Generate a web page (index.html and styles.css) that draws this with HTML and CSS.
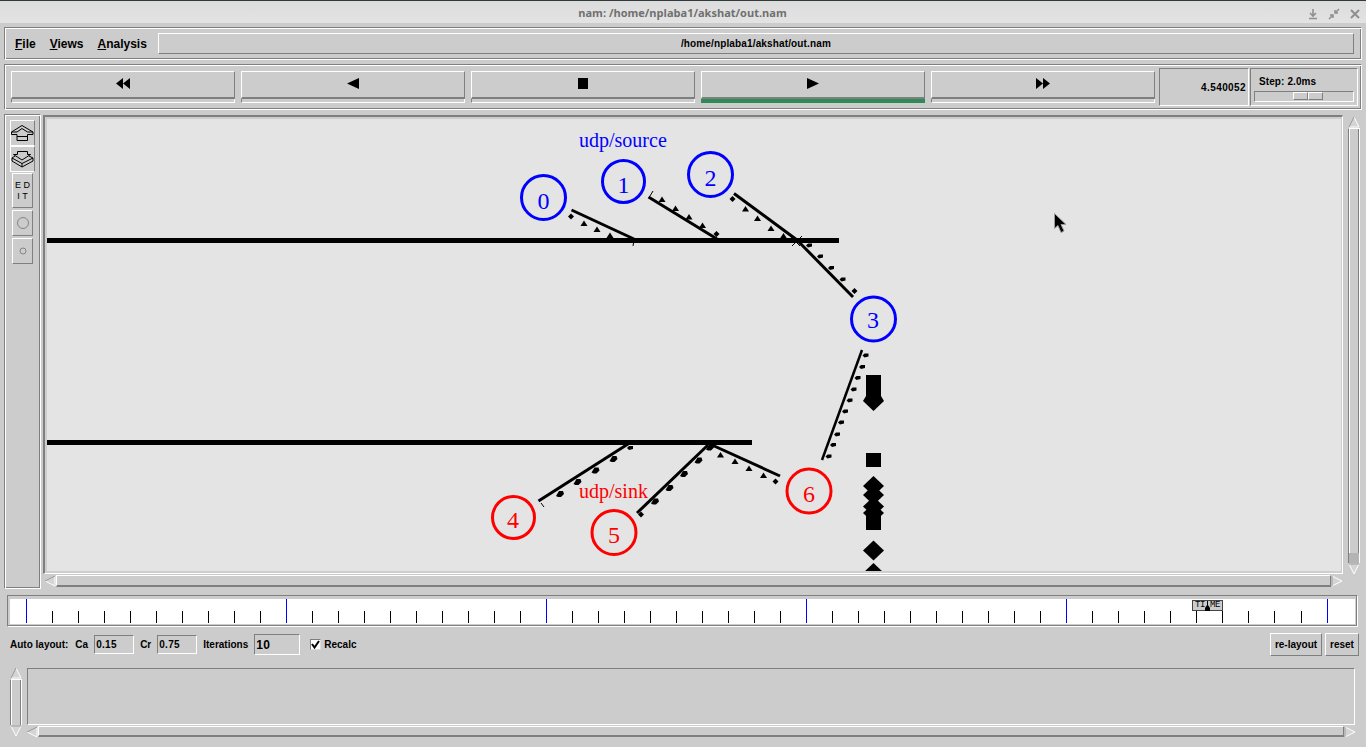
FILE: index.html
```html
<!DOCTYPE html>
<html lang="en">
<head>
<meta charset="utf-8">
<title>nam: /home/nplaba1/akshat/out.nam</title>
<link rel="stylesheet" href="styles.css">
</head>
<body>
<header class="titlebar">
  <span class="title">nam: /home/nplaba1/akshat/out.nam</span>
  <div class="wm-buttons">
    <svg width="12" height="12" viewBox="0 0 12 12"><path d="M6 1V7M3 5L6 8L9 5M2 10.5H10" fill="none" stroke="#8f8f8f" stroke-width="1.6"/></svg>
    <svg width="12" height="12" viewBox="0 0 12 12"><path d="M11 1L7.5 4.5M7 2V5H10M1 11L4.5 7.5M5 10V7H2" fill="none" stroke="#8f8f8f" stroke-width="1.5"/></svg>
    <svg width="12" height="12" viewBox="0 0 12 12"><path d="M2 2L10 10M10 2L2 10" fill="none" stroke="#8f8f8f" stroke-width="2"/></svg>
  </div>
</header>

<nav class="menu-frame groove">
  <span class="menu-item"><u>F</u>ile</span>
  <span class="menu-item"><u>V</u>iews</span>
  <span class="menu-item"><u>A</u>nalysis</span>
  <div class="path-field raised">/home/nplaba1/akshat/out.nam</div>
</nav>

<section class="tool-frame groove">
  <div class="play-btn"><div class="face"><svg width="14" height="11" viewBox="0 0 14 11"><path d="M0 5.5L7 0V11ZM7 5.5L14 0V11Z"/></svg></div><div class="strip"></div></div>
  <div class="play-btn"><div class="face"><svg width="12" height="11" viewBox="0 0 12 11"><path d="M0 5.5L12 0V11Z"/></svg></div><div class="strip"></div></div>
  <div class="play-btn"><div class="face"><svg width="10" height="11" viewBox="0 0 10 11"><path d="M0 0H10V11H0Z"/></svg></div><div class="strip"></div></div>
  <div class="play-btn"><div class="face"><svg width="12" height="11" viewBox="0 0 12 11"><path d="M0 0L12 5.5L0 11Z"/></svg></div><div class="strip strip-on"></div></div>
  <div class="play-btn"><div class="face"><svg width="14" height="11" viewBox="0 0 14 11"><path d="M0 0L7 5.5L0 11ZM7 0L14 5.5L7 11Z"/></svg></div><div class="strip"></div></div>
  <div class="time-cell sunken">4.540052</div>
  <div class="step-cell sunken">
    <span class="step-label">Step: 2.0ms</span>
    <div class="step-trough sunken"><div class="step-thumb raised"></div><div class="step-thumb raised"></div></div>
  </div>
</section>

<main class="main">
  <aside class="tools groove">
    <div class="tool-btn tool-wide raised">
      <svg width="25" height="26" viewBox="10 120 25 26"><path d="M22 125.5L33 132V134.5H27.5V140.5H17V134.5H11.5V132ZM11.5 132H17L22 128.5L27.5 132H33M17 136.5H27.5" fill="none" stroke="#000" stroke-width="1"/></svg>
    </div>
    <div class="tool-btn tool-wide raised">
      <svg width="25" height="25" viewBox="10 147 25 25"><path d="M17.5 151.5H27.5V154.5H30.5L22 160L13.5 154.5H17.5ZM15 156L12 158V161L22 167L33 161V158L29 156M12 158L22 163.5L33 158M22 163.5V167" fill="none" stroke="#000" stroke-width="1"/></svg>
    </div>
    <div class="tool-btn tool-edit raised"><span>E D</span><span>I T</span></div>
    <div class="tool-btn tool-circle raised"><svg width="14" height="14" viewBox="0 0 14 14"><circle cx="7" cy="7" r="5.5" fill="none" stroke="#858585"/></svg></div>
    <div class="tool-btn tool-circle raised"><svg width="10" height="10" viewBox="0 0 10 10"><circle cx="5" cy="5" r="3" fill="none" stroke="#858585"/></svg></div>
  </aside>

  <div class="center">
    <div class="canvas">
      <svg class="net" width="1294" height="452" viewBox="47 119 1294 452">
        <defs>
          <path id="tri" d="M-3.5 2.5L0 -3L3.5 2.5Z"/>
          <path id="dia" d="M-3 0L0 -3L3 0L0 3Z"/>
          <path id="blob" d="M-4 2L-1 -3L3 -3L4 0L1 3L-2 3Z"/>
          <path id="nib" d="M-3 0L-1 -2L3 -2L3 1L-1 2Z"/>
          <path id="big" d="M-10.5 0L0 -10L10.5 0L0 10Z"/>
        </defs>

        <g class="bars">
          <line x1="47" y1="240.5" x2="839" y2="240.5"/>
          <line x1="47" y1="442.5" x2="752" y2="442.5"/>
        </g>
        <g class="links">
          <line x1="571.5" y1="210" x2="634" y2="239"/>
          <line x1="648.5" y1="197" x2="717" y2="239"/>
          <line x1="734" y1="193.5" x2="797" y2="240"/>
          <line x1="797" y1="240" x2="853" y2="297"/>
          <line x1="862" y1="350" x2="822" y2="460"/>
          <line x1="538.5" y1="501" x2="628" y2="444"/>
          <line x1="637" y1="513" x2="708" y2="445"/>
          <line x1="780" y1="476" x2="712" y2="445"/>
        </g>
        <g class="ticks">
          <path d="M634 240L633 246M653 191L650 196M802 236L792 246M790 236L800 246M541 503L544 507"/>
        </g>
        <g class="packets">
          <use href="#dia" x="571" y="216.5"/><use href="#tri" x="584" y="223.5"/><use href="#tri" x="597" y="229.5"/><use href="#tri" x="610" y="235.5"/>
          <use href="#tri" x="662" y="199.5"/><use href="#tri" x="675.5" y="208.5"/><use href="#tri" x="689" y="217"/><use href="#tri" x="702.5" y="225.5"/><use href="#dia" x="716.5" y="234"/>
          <use href="#dia" x="732.5" y="199"/><use href="#tri" x="745.5" y="209"/><use href="#tri" x="757.5" y="218.5"/><use href="#tri" x="771" y="228.5"/><use href="#tri" x="783.5" y="236"/>
          <use href="#nib" x="809" y="245.5"/><use href="#nib" x="820" y="256.5"/><use href="#nib" x="831" y="268"/><use href="#nib" x="842.5" y="279.5"/><use href="#dia" x="854.5" y="291"/>
          <use href="#nib" x="865.5" y="355.5"/><use href="#nib" x="862" y="367"/><use href="#nib" x="857.5" y="378"/><use href="#nib" x="853.5" y="389.5"/><use href="#nib" x="849.5" y="400.5"/><use href="#nib" x="845" y="411.5"/><use href="#nib" x="841" y="422.5"/><use href="#nib" x="837" y="434.5"/><use href="#nib" x="833" y="445"/><use href="#nib" x="828.5" y="456.5"/>
          <use href="#nib" x="630" y="448"/><use href="#blob" x="613.5" y="459"/><use href="#blob" x="595.5" y="470.5"/><use href="#blob" x="577.5" y="482"/><use href="#blob" x="560" y="494"/>
          <use href="#blob" x="710" y="447.5"/><use href="#blob" x="698.5" y="460.5"/><use href="#blob" x="684" y="474"/><use href="#blob" x="669.5" y="488"/><use href="#blob" x="655" y="501.5"/><use href="#dia" x="641" y="514.5"/>
          <use href="#tri" x="720.5" y="455"/><use href="#tri" x="735" y="461.5"/><use href="#tri" x="749" y="468.5"/><use href="#tri" x="763.5" y="475.5"/><use href="#dia" x="775.5" y="481.5"/>
          <path d="M866 375H881V396L884 401L873.5 411L863 401L866 396Z"/>
          <path d="M866 453H881V467H866Z"/>
          <use href="#big" x="873.5" y="486"/><use href="#big" x="873.5" y="495"/><use href="#big" x="873.5" y="506.5"/><use href="#big" x="873.5" y="513"/>
          <path d="M866 513H881V530H866Z"/>
          <use href="#big" x="873.5" y="550.5"/><use href="#big" x="873.5" y="573"/>
        </g>
        <g class="node-blue">
          <circle cx="543.5" cy="197.5" r="22"/><circle cx="623.5" cy="181.5" r="21"/><circle cx="710.5" cy="174.5" r="22"/><circle cx="873.5" cy="319" r="22"/>
        </g>
        <g class="node-red">
          <circle cx="513.5" cy="517.5" r="21"/><circle cx="614" cy="532.5" r="22"/><circle cx="809" cy="491" r="22"/>
        </g>
        <g class="num-blue">
          <text x="543.5" y="208.5">0</text><text x="623.5" y="192.5">1</text><text x="710.5" y="185.5">2</text><text x="873" y="328">3</text>
        </g>
        <g class="num-red">
          <text x="513" y="527.5">4</text><text x="614" y="543">5</text><text x="809" y="502">6</text>
        </g>
        <text class="label-blue" x="579" y="147">udp/source</text>
        <text class="label-red" x="579" y="498">udp/sink</text>
        <path class="cursor" d="M1054.5 213.5V228.5L1058 225.5L1061 232.5L1064 231L1061 224.5H1066Z"/>
      </svg>
    </div>
    <div class="hscroll canvas-h">
      <svg class="arrow" width="12" height="12" viewBox="0 0 12 12"><path d="M1 6L11 1V11Z" fill="#d4d4d4" stroke="#fff"/><path d="M1 6L11 1" stroke="#8a8a8a" fill="none"/></svg>
      <div class="h-trough"></div>
      <svg class="arrow" width="12" height="12" viewBox="0 0 12 12"><path d="M11 6L1 1V11Z" fill="#d4d4d4" stroke="#fff"/><path d="M1 1V11" stroke="#8a8a8a" fill="none"/></svg>
    </div>
  </div>

  <div class="vscroll canvas-v">
    <svg class="arrow" width="12" height="12" viewBox="0 0 12 12"><path d="M6 1L1 11H11Z" fill="#d4d4d4" stroke="#fff"/><path d="M6 1L1 11" stroke="#8a8a8a" fill="none"/></svg>
    <div class="v-trough"></div>
    <div class="v-active"></div>
    <svg class="arrow" width="12" height="12" viewBox="0 0 12 12"><path d="M6 11L1 1H11Z" fill="#d4d4d4" stroke="#fff"/><path d="M1 1H11" stroke="#8a8a8a" fill="none"/></svg>
  </div>
</main>

<section class="timeline">
  <div class="time-strip">
    <i class="t b"></i><i class="t"></i><i class="t"></i><i class="t"></i><i class="t"></i><i class="t"></i><i class="t"></i><i class="t"></i><i class="t"></i><i class="t"></i>
    <i class="t b"></i><i class="t"></i><i class="t"></i><i class="t"></i><i class="t"></i><i class="t"></i><i class="t"></i><i class="t"></i><i class="t"></i><i class="t"></i>
    <i class="t b"></i><i class="t"></i><i class="t"></i><i class="t"></i><i class="t"></i><i class="t"></i><i class="t"></i><i class="t"></i><i class="t"></i><i class="t"></i>
    <i class="t b"></i><i class="t"></i><i class="t"></i><i class="t"></i><i class="t"></i><i class="t"></i><i class="t"></i><i class="t"></i><i class="t"></i><i class="t"></i>
    <i class="t b"></i><i class="t"></i><i class="t"></i><i class="t"></i><i class="t"></i><i class="t"></i><i class="t"></i><i class="t"></i><i class="t t-wide"></i><i class="t"></i>
    <i class="t b"></i>
    <div class="time-marker"><span>TI</span><svg width="5" height="10" viewBox="0 0 5 10"><path d="M2 0H3V4L5 7V10H0V7L2 4Z"/></svg><span>ME</span></div>
  </div>
</section>

<section class="auto-row">
  <span class="lbl lbl-first">Auto layout:</span>
  <span class="lbl">Ca</span>
  <span class="entry sunken">0.15</span>
  <span class="lbl">Cr</span>
  <span class="entry sunken">0.75</span>
  <span class="lbl">Iterations</span>
  <span class="entry entry-iter sunken">10</span>
  <span class="check"><svg width="9" height="9" viewBox="0 0 9 9"><path d="M1 4L3.5 7.5L8 1" fill="none" stroke="#000" stroke-width="2"/></svg></span>
  <span class="lbl lbl-check">Recalc</span>
  <span class="cmd cmd-layout raised">re-layout</span>
  <span class="cmd cmd-reset raised">reset</span>
</section>

<section class="console">
  <div class="vscroll console-v">
    <svg class="arrow" width="12" height="12" viewBox="0 0 12 12"><path d="M6 1L1 11H11Z" fill="#d4d4d4" stroke="#fff"/><path d="M6 1L1 11" stroke="#8a8a8a" fill="none"/></svg>
    <div class="v-trough"></div>
    <svg class="arrow" width="12" height="12" viewBox="0 0 12 12"><path d="M6 11L1 1H11Z" fill="#d4d4d4" stroke="#fff"/><path d="M1 1H11" stroke="#8a8a8a" fill="none"/></svg>
  </div>
  <div class="console-main">
    <div class="console-text sunken"></div>
    <div class="hscroll console-h">
      <svg class="arrow" width="12" height="12" viewBox="0 0 12 12"><path d="M1 6L11 1V11Z" fill="#d4d4d4" stroke="#fff"/><path d="M1 6L11 1" stroke="#8a8a8a" fill="none"/></svg>
      <div class="h-trough"></div>
      <svg class="arrow" width="12" height="12" viewBox="0 0 12 12"><path d="M11 6L1 1V11Z" fill="#d4d4d4" stroke="#fff"/><path d="M1 1V11" stroke="#8a8a8a" fill="none"/></svg>
    </div>
  </div>
</section>
</body>
</html>
```

FILE: styles.css
```css
* { box-sizing: border-box; }
html, body { margin: 0; padding: 0; }
body {
  width: 1366px;
  height: 747px;
  overflow: hidden;
  background: #cccccc;
  color: #000;
  font: bold 10px "Liberation Sans", Arial, sans-serif;
  display: flex;
  flex-direction: column;
}

.groove {
  border: 1px solid;
  border-color: #7f7f7f #ffffff #ffffff #7f7f7f;
  box-shadow: inset 1px 1px 0 #ffffff, inset -1px -1px 0 #7f7f7f;
}
.raised {
  border: 1px solid;
  border-color: #ffffff #7f7f7f #7f7f7f #ffffff;
}
.sunken {
  border: 1px solid;
  border-color: #7f7f7f #ffffff #ffffff #7f7f7f;
}

/* title bar */
.titlebar {
  height: 23px;
  flex: none;
  border-top: 1px solid #2e3a3c;
  background: linear-gradient(#dcdcdc, #e3e3e3);
  position: relative;
  display: flex;
  align-items: center;
  justify-content: center;
}
.title {
  font: bold 11px "Open Sans", "Noto Sans", sans-serif;
  color: #6f6f6f;
  margin-left: -1px;
  margin-top: 1px;
}
.wm-buttons {
  position: absolute;
  right: 5px;
  top: 7px;
  display: flex;
  gap: 9px;
}

/* menu */
.menu-frame {
  flex: none;
  margin: 4px 4px 0 4px;
  height: 33px;
  padding: 5px 7px 5px 10px;
  display: flex;
  align-items: center;
}
.menu-item {
  font-size: 12px;
  margin-right: 14px;
}
.menu-item:nth-child(3) { margin-right: 11px; }
.path-field {
  flex: 1;
  height: 21px;
  display: flex;
  align-items: center;
  justify-content: center;
  font-size: 10px;
  letter-spacing: 0.14px;
}

/* transport */
.tool-frame {
  flex: none;
  margin: 4px 4px 0 4px;
  height: 46px;
  padding: 3px 2px 3px 6px;
  display: flex;
  align-items: center;
}
.play-btn {
  width: 224px;
  height: 32px;
  margin-right: 6px;
  display: flex;
  flex-direction: column;
}
.play-btn:nth-child(5) { margin-right: 4px; }
.face {
  height: 28px;
  border: solid #7f7f7f;
  border-width: 1px 1px 2px 1px;
  border-top-color: #fff;
  border-left-color: #fff;
  display: flex;
  align-items: center;
  justify-content: center;
  padding-bottom: 2px;
}
.face svg { display: block; fill: #000; }
.strip {
  height: 4px;
  border: solid #fff;
  border-width: 0 1px 1px 1px;
  border-left-color: #7f7f7f;
}
.strip-on {
  background: #2e8b57;
  border-color: #2e8b57;
}
.time-cell {
  width: 90px;
  height: 38px;
  margin-right: 1px;
  display: flex;
  align-items: center;
  justify-content: flex-end;
  padding: 1px 2px 0 0;
  letter-spacing: 0.4px;
}
.step-cell {
  width: 108px;
  height: 38px;
  padding: 6px 3px 3px 3px;
  display: flex;
  flex-direction: column;
}
.step-label {
  margin-left: 5px;
  height: 16px;
  line-height: 14px;
  letter-spacing: 0.1px;
}
.step-trough {
  width: 100px;
  height: 11px;
  display: flex;
  justify-content: flex-start;
  padding-left: 38px;
}
.step-thumb {
  width: 15px;
  height: 8px;
}

/* main */
.main {
  flex: none;
  margin-top: 4px;
  height: 475px;
  display: flex;
  align-items: flex-start;
}
.tools {
  width: 37px;
  height: 475px;
  margin: 0 2px 0 4px;
  padding: 5px 0 0 5px;
  display: flex;
  flex-direction: column;
}
.tool-btn {
  display: flex;
  align-items: center;
  justify-content: center;
}
.tool-wide {
  width: 25px;
  height: 26px;
  border-color: #ffffff #7f7f7f #ffffff #ffffff;
}
.tool-wide svg { display: block; margin: -1px; flex: none; }
.tool-edit {
  width: 21px;
  height: 35px;
  margin: 1px 0 2px 2px;
  flex-direction: column;
  gap: 2px;
  font: normal 9px/9px "Liberation Sans", sans-serif;
}
.tool-circle {
  width: 21px;
  height: 26px;
  margin: 0 0 2px 2px;
}
.center {
  width: 1300px;
  margin-top: 1px;
  margin-right: 5px;
}
.canvas {
  width: 1300px;
  height: 459px;
  background: #cecece;
  border: solid #7f7f7f;
  border-width: 2px 1px 1px 2px;
  border-right-color: #fff;
  border-bottom-color: #fff;
  padding: 2px 0 0 2px;
}
.net {
  display: block;
  background: #e4e4e4;
}
.bars line { stroke: #000; stroke-width: 5; }
.links line { stroke: #000; stroke-width: 3; }
.links line:nth-child(5) { stroke-width: 2.5; }
.ticks path { stroke: #000; stroke-width: 1; fill: none; }
.packets { fill: #000; }
.node-blue circle { fill: none; stroke: #0000ff; stroke-width: 3; }
.node-red circle { fill: none; stroke: #ff0000; stroke-width: 3; }
.num-blue text, .num-red text {
  font: normal 24px "Liberation Serif", "Times New Roman", serif;
  text-anchor: middle;
}
.num-blue text { fill: #0000ff; }
.num-red text { fill: #ff0000; }
.label-blue, .label-red { font: normal 20px "Liberation Serif", "Times New Roman", serif; }
.label-blue { fill: #0000ff; }
.label-red { fill: #ff0000; }
.cursor { fill: #000; stroke: #9a9a9a; stroke-width: 1; }

/* scrollbars */
.arrow { display: block; flex: none; }
.hscroll {
  height: 12px;
  display: flex;
}
.h-trough {
  flex: 1;
  border-top: 1px solid #fff;
  border-bottom: 2px solid #7f7f7f;
  border-left: 1px solid #fff;
  border-right: 1px solid #7f7f7f;
}
.canvas-h {
  width: 1299px;
  margin: 1px 0 0 1px;
}
.vscroll {
  width: 12px;
  display: flex;
  flex-direction: column;
}
.v-trough {
  flex: 1;
  border-left: 1px solid #7f7f7f;
  border-right: 1px solid #fff;
  border-top: 1px solid #fff;
  box-shadow: inset 1px 0 0 #fff, inset -1px 0 0 #7f7f7f;
}
.v-active {
  height: 10px;
  background: #b4b4b4;
  border-left: 1px solid #7f7f7f;
  border-right: 1px solid #fff;
}
.canvas-v {
  height: 459px;
  margin-top: 2px;
}

/* timeline */
.timeline {
  flex: none;
  margin: 6px 8px 0 7px;
  height: 32px;
  border: 1px solid;
  border-color: #7f7f7f #fff #fff #7f7f7f;
  box-shadow: inset -1px -1px 0 #7f7f7f;
  padding: 3px 2px 2px 2px;
}
.time-strip {
  position: relative;
  height: 25px;
  background: #fff;
  padding: 0 0 1px 16px;
  display: flex;
  align-items: flex-end;
}
.t {
  display: block;
  flex: none;
  width: 26px;
  height: 12px;
  border-left: 1px solid #000;
}
.t.b {
  height: 24px;
  border-left-color: #0000ff;
}
.t-wide { width: 27px; }
.time-marker {
  position: absolute;
  left: 1182px;
  top: 1px;
  width: 31px;
  height: 11px;
  background: #cccccc;
  border: 1px solid #444;
  display: flex;
  align-items: center;
  justify-content: center;
  font: normal 9px/9px "Liberation Mono", monospace;
}
.time-marker span { letter-spacing: -0.4px; }
.time-marker svg { display: block; flex: none; }

/* auto layout */
.auto-row {
  flex: none;
  margin-top: 5px;
  height: 24px;
  padding: 0 7px 0 10px;
  display: flex;
  align-items: center;
  gap: 6px;
}
.lbl-first { margin-right: 1px; }
.entry {
  width: 40px;
  height: 19px;
  padding: 1px 0 0 1px;
  display: flex;
  align-items: center;
  letter-spacing: 0.3px;
}
.entry-iter {
  width: 46px;
  height: 21px;
  font-size: 12px;
}
.check {
  width: 11px;
  height: 11px;
  margin-left: 4px;
  margin-right: -3px;
  background: #fff;
  border: 1px solid;
  border-color: #7f7f7f #ddd #ddd #7f7f7f;
  display: flex;
  align-items: center;
  justify-content: center;
}
.check svg { display: block; flex: none; }
.cmd {
  height: 23px;
  display: flex;
  align-items: center;
  justify-content: center;
}
.cmd-layout { width: 52px; margin-left: auto; margin-right: -3px; }
.cmd-reset { width: 34px; }

/* console */
.console {
  flex: none;
  margin-top: 11px;
  height: 70px;
  padding: 0 10px 0 10px;
  display: flex;
}
.console-v { height: 70px; margin-right: 4px; }
.console-main { width: 1330px; }
.console-text {
  width: 1328px;
  height: 57px;
  margin: 1px 0 1px 1px;
}
.console-h { width: 1330px; height: 11px; }
```
